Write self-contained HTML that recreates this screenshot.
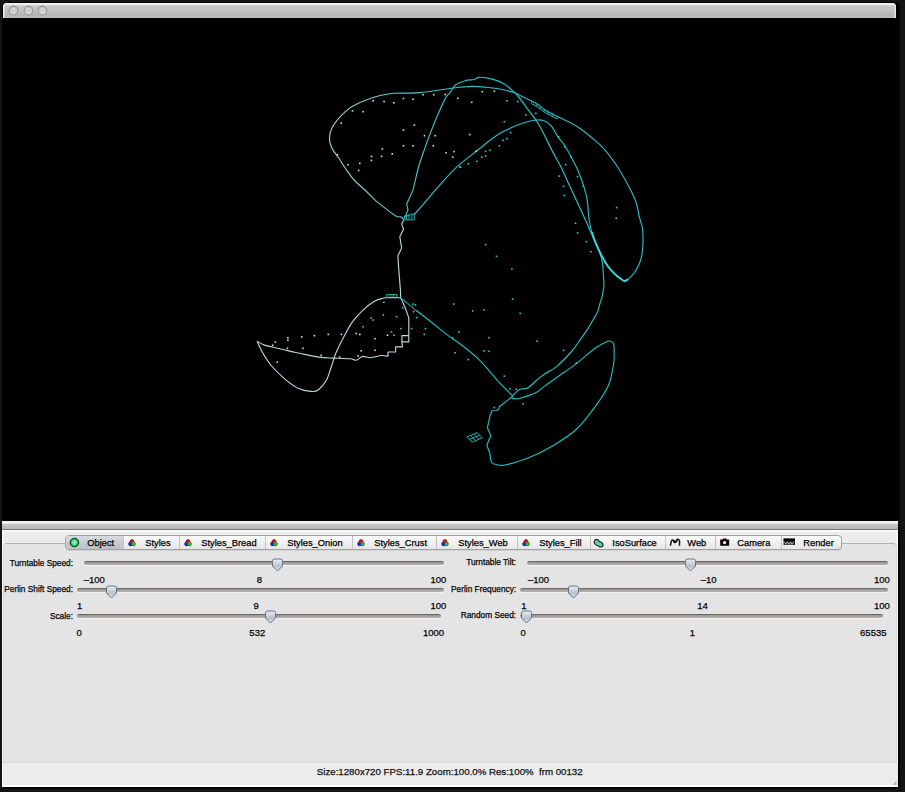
<!DOCTYPE html>
<html><head><meta charset="utf-8"><style>
html,body{margin:0;padding:0;width:905px;height:792px;overflow:hidden;background:#141414;position:relative;font-family:"Liberation Sans", sans-serif}
.t{position:absolute;white-space:nowrap;line-height:normal;font-family:"Liberation Sans", sans-serif;-webkit-text-stroke:0.25px currentColor}
#shadow{position:absolute;left:1.5px;top:2px;width:898.2px;height:786.5px;background:#030303;border-radius:5px 5px 2px 2px}
#title{position:absolute;left:3px;top:3px;width:893px;height:15px;border-radius:4px 4px 0 0;background:linear-gradient(#e8e8e8 0,#f2f2f2 1px,#eeeeee 1.8px,#c9c9c9 2.6px,#c2c2c2 7px,#b3b3b3 12.8px,#bababa 13.6px,#bebebe 15px);box-shadow:inset 1.5px 0 0 #ececec, inset -1.5px 0 0 #e6e6e6}
.btn{position:absolute;top:4.9px}
#canvas{position:absolute;left:3px;top:18px;width:893px;height:504px;background:#000}
#panel{position:absolute;left:2px;top:521px;width:896px;height:266px;background:#ececec;box-shadow:inset 1.5px 0 0 #fbfbfb, inset -1.5px 0 0 #fbfbfb}
#split{position:absolute;left:2px;top:522.4px;width:896px;height:10px;background:linear-gradient(#f6f6f6 0,#f2f2f2 1.2px,#c6c6c6 2px,#b8b8b8 6.5px,#7c7c7c 6.9px,#7c7c7c 7.7px,#f8f8f8 8.2px,#f8f8f8 9.5px,#ececec 10px)}
#content{position:absolute;left:3px;top:542.8px;width:892px;height:218.5px;background:#e4e4e4;border-top:1.8px solid #b2b2b2;border-left:1px solid #d6d6d6;border-right:1px solid #d6d6d6;border-bottom:1px solid #d8d8d8;border-radius:4px 4px 0 0}
#status{position:absolute;left:3px;top:763px;width:895px;height:22px;background:#ececec}
#bottomline{position:absolute;left:2px;top:785px;width:896px;height:1.7px;background:#fff}
#tabbar{position:absolute;left:65px;top:535.4px;width:776.5px;height:14.8px;box-sizing:border-box;border:1px solid #a2a2a2;border-radius:4px;background:linear-gradient(#fbfbfb,#f0f0f0 50%,#e6e6e6);box-shadow:0 0.5px 0.5px rgba(0,0,0,0.15);overflow:hidden}
.tab{position:absolute;top:0;height:14px}
.tab.sel{background:linear-gradient(#d8dde2,#c4cad0 50%,#b9c0c8)}
.sep{position:absolute;top:0;width:1px;height:14px;background:#c4c4c4}
.trk{position:absolute;height:4px;border-radius:2px;background:linear-gradient(#6c6866 0,#6c6866 0.9px,#9c9896 1.4px,#aaa6a4 3px,#bcb8b6 4px);box-shadow:0 1px 0 rgba(255,255,255,0.55)}
.thumb{position:absolute}
.ic{position:absolute}
</style></head><body>
<div id="shadow"></div>
<div id="title"></div>
<svg class="btn" style="left:8.1px" width="11" height="11" viewBox="0 0 11 11"><defs><linearGradient id="bg0" x1="0" y1="0" x2="0" y2="1"><stop offset="0" stop-color="#a8a8a8"/><stop offset="0.35" stop-color="#c4c4c4"/><stop offset="1" stop-color="#dcdcdc"/></linearGradient></defs><circle cx="5.5" cy="5.5" r="4.4" fill="url(#bg0)" stroke="#8e8e8e" stroke-width="0.9"/><ellipse cx="5.5" cy="3.4" rx="2" ry="1" fill="#e8e8e8" opacity="0.7"/></svg><svg class="btn" style="left:22.5px" width="11" height="11" viewBox="0 0 11 11"><defs><linearGradient id="bg1" x1="0" y1="0" x2="0" y2="1"><stop offset="0" stop-color="#a8a8a8"/><stop offset="0.35" stop-color="#c4c4c4"/><stop offset="1" stop-color="#dcdcdc"/></linearGradient></defs><circle cx="5.5" cy="5.5" r="4.4" fill="url(#bg1)" stroke="#8e8e8e" stroke-width="0.9"/><ellipse cx="5.5" cy="3.4" rx="2" ry="1" fill="#e8e8e8" opacity="0.7"/></svg><svg class="btn" style="left:37.4px" width="11" height="11" viewBox="0 0 11 11"><defs><linearGradient id="bg2" x1="0" y1="0" x2="0" y2="1"><stop offset="0" stop-color="#a8a8a8"/><stop offset="0.35" stop-color="#c4c4c4"/><stop offset="1" stop-color="#dcdcdc"/></linearGradient></defs><circle cx="5.5" cy="5.5" r="4.4" fill="url(#bg2)" stroke="#8e8e8e" stroke-width="0.9"/><ellipse cx="5.5" cy="3.4" rx="2" ry="1" fill="#e8e8e8" opacity="0.7"/></svg>
<div id="canvas"><svg width="893" height="504" viewBox="3 18 893 504" style="position:absolute;left:0;top:0"><defs><linearGradient id="lg" gradientUnits="userSpaceOnUse" x1="330" y1="0" x2="450" y2="0"><stop offset="0" stop-color="#a0d0d0"/><stop offset="1" stop-color="#2cbcc4"/></linearGradient></defs>
<path d="M403.6 219.7 L401.7 217.1 L396.6 216.5 L390.3 212.1 L376.4 201.4 L365.0 190.0" fill="none" stroke="url(#lg)" stroke-width="1.15" stroke-opacity="1" stroke-linejoin="round"/>
<path d="M365.0 190.0 C363.2 188.3 357.4 183.6 354.1 180.0 C350.9 176.4 348.0 172.1 345.5 168.5 C343.0 164.9 341.0 161.5 338.9 158.3 C336.8 155.1 334.2 152.6 332.6 149.4 C331.0 146.2 329.5 143.1 329.5 139.3 C329.5 135.5 330.0 131.3 332.6 126.7 C335.2 122.1 341.1 115.5 345.3 111.6 C349.5 107.7 352.2 106.0 357.9 103.4 C363.6 100.8 373.4 97.5 379.3 95.8 C385.2 94.1 386.5 93.8 393.2 93.3 C399.9 92.8 410.0 93.4 419.7 92.6 C429.4 91.8 442.9 89.2 451.5 88.2 C460.1 87.2 465.1 86.5 471.6 86.4 C478.1 86.3 484.8 87.1 490.5 87.7 C496.2 88.3 501.5 89.2 505.7 90.2 C509.9 91.2 513.1 92.4 515.8 93.4 C518.5 94.5 518.8 94.8 522.1 96.5 C525.5 98.2 531.9 101.0 535.9 103.3 C539.9 105.6 542.2 108.3 546.0 110.6 C549.8 112.9 554.6 115.0 558.6 117.0 C562.6 119.0 566.4 120.6 570.0 122.5 C573.6 124.4 576.4 126.0 580.0 128.5 C583.6 131.0 587.9 134.5 591.8 137.7 C595.6 140.9 599.1 143.4 603.1 147.8 C607.1 152.2 611.6 157.9 615.8 164.2 C620.0 170.5 625.0 179.4 628.4 185.7 C631.8 192.0 634.2 196.9 636.0 202.0 C637.8 207.1 638.0 211.5 639.1 216.0 C640.2 220.5 641.9 224.5 642.5 228.8 C643.1 233.2 643.1 238.0 643.0 242.1 C642.9 246.2 642.7 250.1 642.1 253.6 C641.5 257.1 640.8 260.1 639.5 263.3 C638.2 266.5 636.1 270.4 634.2 273.0 C632.3 275.6 629.6 277.9 628.0 279.2 C626.4 280.5 625.1 280.7 624.5 281.0" fill="none" stroke="url(#lg)" stroke-width="1.15" stroke-opacity="1" stroke-linejoin="round"/>
<path d="M624.5 281.0 C623.8 280.6 621.6 279.5 620.0 278.3 C618.4 277.1 616.8 276.0 614.7 273.9 C612.7 271.8 609.9 269.0 607.7 265.9 C605.5 262.8 603.6 259.3 601.5 255.3 C599.4 251.3 597.6 247.1 595.3 242.1 C593.0 237.1 589.4 229.0 587.8 225.3 C586.2 221.6 587.4 224.1 585.5 220.0 C583.6 215.9 579.4 206.7 576.6 200.8 C573.9 194.9 571.5 189.9 569.0 184.4 C566.5 178.9 564.2 173.5 561.5 168.0 C558.8 162.5 556.2 158.5 552.6 151.6 C549.0 144.7 543.2 132.3 540.0 126.5 C536.8 120.7 535.8 120.0 533.4 116.7 C531.0 113.4 528.4 110.0 525.9 106.6 C523.4 103.2 520.6 99.2 518.3 96.5 C516.0 93.8 514.3 92.3 512.0 90.2 C509.7 88.1 507.1 85.6 504.4 83.9 C501.7 82.2 498.3 81.0 495.6 80.1 C492.9 79.1 490.8 78.7 488.0 78.2 C485.2 77.7 481.4 77.1 479.1 77.3 C476.8 77.5 476.4 78.9 474.1 79.5 C471.8 80.1 468.5 79.8 465.3 80.7 C462.1 81.7 457.7 83.2 455.2 85.2 C452.7 87.2 451.8 90.4 450.1 92.7 C448.4 95.0 448.1 92.7 445.0 99.0 C441.9 105.3 435.7 119.4 431.3 130.6 C426.9 141.8 420.8 160.1 418.7 166.0" fill="none" stroke="url(#lg)" stroke-width="1.2" stroke-opacity="1" stroke-linejoin="round"/>
<path d="M418.7 166.0 L413.0 190.0 L406.7 203.9 L408.0 210.2 L403.6 219.7" fill="none" stroke="url(#lg)" stroke-width="1.1" stroke-opacity="1" stroke-linejoin="round"/>
<path d="M413.6 215.2 C415.3 213.3 419.5 208.6 423.7 203.8 C427.9 199.0 433.4 192.3 438.9 186.2 C444.4 180.1 450.3 173.1 456.6 167.2 C462.9 161.3 469.5 156.5 476.8 150.8 C484.1 145.1 492.8 137.7 500.5 133.1 C508.2 128.5 517.3 125.2 523.2 123.0 C529.1 120.8 532.5 120.4 535.9 120.0 C539.3 119.6 540.9 119.6 543.4 120.5 C545.9 121.4 548.6 122.9 551.0 125.6 C553.4 128.2 555.3 132.9 557.7 136.4 C560.1 139.9 563.0 142.9 565.3 146.5 C567.6 150.1 569.5 153.9 571.6 157.9 C573.7 161.9 575.9 165.9 577.9 170.5 C579.9 175.1 582.0 180.6 583.6 185.7 C585.2 190.8 586.4 195.1 587.3 200.8 C588.2 206.5 588.3 214.2 589.2 220.0 C590.1 225.8 591.0 230.5 592.7 235.9 C594.5 241.3 598.1 248.3 599.7 252.7 C601.3 257.1 601.8 259.0 602.4 262.4 C603.0 265.8 603.0 269.2 603.3 273.0 C603.5 276.8 604.0 281.5 603.9 285.2 C603.8 288.9 603.1 291.9 602.4 295.3 C601.6 298.7 600.2 302.5 599.4 305.4 C598.6 308.2 598.4 310.0 597.4 312.4 C596.4 314.8 595.0 316.6 593.3 319.5 C591.6 322.4 589.5 326.2 587.3 329.6 C585.1 333.0 582.8 336.1 580.2 339.7 C577.7 343.3 575.9 346.5 572.0 351.0 C568.1 355.5 561.1 362.8 556.6 366.6 C552.1 370.4 548.7 371.3 545.3 373.6 C541.9 375.9 539.3 378.1 536.4 380.5 C533.5 382.9 530.3 386.6 527.6 388.1 C524.9 389.6 522.2 388.3 520.0 389.3 C517.8 390.3 515.5 392.9 514.1 394.2 C512.7 395.5 512.2 396.5 511.8 397.0" fill="none" stroke="url(#lg)" stroke-width="1.15" stroke-opacity="1" stroke-linejoin="round"/>
<path d="M511.8 397.0 L499.3 406.7 L498.8 409.0 L497.0 410.5 L492.0 410.7 L490.2 415.2 L487.4 427.7 L490.8 435.7 L486.8 445.3 L489.7 452.7 L490.8 460.7 L492.5 463.5" fill="none" stroke="#22bcc0" stroke-width="1.15" stroke-opacity="1" stroke-linejoin="round"/>
<path d="M492.5 463.5 C494.4 463.8 497.6 466.2 503.9 465.2 C510.1 464.2 522.1 460.4 530.0 457.3 C537.9 454.2 543.4 451.4 551.0 446.8 C558.6 442.2 568.1 436.8 575.6 430.0 C583.1 423.2 590.3 413.2 595.8 405.8 C601.3 398.4 605.5 392.3 608.4 385.6 C611.3 378.9 612.4 370.4 613.4 365.4 C614.4 360.3 614.1 359.0 614.1 355.3 C614.1 351.6 614.4 345.7 613.4 343.3 C612.4 340.9 609.2 341.1 608.4 340.7" fill="none" stroke="#22bcc0" stroke-width="1.15" stroke-opacity="1" stroke-linejoin="round"/>
<path d="M608.4 340.7 C606.3 341.9 601.3 343.8 595.8 347.7 C590.3 351.6 581.9 359.3 575.6 364.1 C569.3 368.9 563.0 373.1 557.9 376.7 C552.8 380.3 549.1 382.9 545.3 385.6 C541.5 388.3 539.4 391.0 535.2 393.1 C531.0 395.2 523.7 397.3 520.0 398.2 C516.3 399.1 514.4 398.9 513.0 398.8 C511.6 398.6 512.0 397.3 511.8 397.0" fill="none" stroke="#22bcc0" stroke-width="1.15" stroke-opacity="1" stroke-linejoin="round"/>
<path d="M415.8 310.3 C417.6 311.7 422.5 315.1 426.8 318.5 C431.1 321.9 438.0 327.5 441.9 330.6 C445.8 333.7 446.6 334.4 450.0 336.9 C453.4 339.4 457.6 341.8 462.6 345.8 C467.7 349.8 474.4 355.0 480.3 360.9 C486.2 366.8 492.5 375.2 498.0 381.1 C503.5 387.0 510.6 393.8 513.1 396.3" fill="none" stroke="#22bcc0" stroke-width="1.15" stroke-opacity="1" stroke-linejoin="round"/>
<path d="M403.6 220.3 L401.7 224.1 L403.6 229.1 L399.8 236.7 L401.7 248.1 L397.9 255.7 L398.5 265.8 L400.4 290.0 L400.7 297.7" fill="none" stroke="#b8d8d8" stroke-width="1.15" stroke-opacity="1" stroke-linejoin="round"/>
<path d="M400.6 298.3 C400.4 298.2 401.6 297.8 399.3 297.7 C397.0 297.6 389.4 297.6 386.7 297.7 C384.0 297.8 385.0 297.7 382.9 298.3 C380.8 298.9 377.5 299.5 374.1 301.5 C370.7 303.5 366.3 306.9 362.7 310.3 C359.1 313.7 355.7 317.4 352.6 321.7 C349.6 325.9 347.1 330.7 344.4 335.8 C341.6 340.9 338.2 347.6 336.1 352.5 C334.0 357.4 333.5 360.4 331.9 365.0 C330.3 369.6 328.7 376.1 326.4 380.3 C324.1 384.5 320.7 388.1 318.1 390.0 C315.6 391.9 314.4 391.6 311.1 391.4 C307.9 391.2 303.0 390.7 298.6 388.6 C294.2 386.5 289.3 382.8 284.7 378.9 C280.1 375.0 274.5 369.4 270.8 365.0 C267.1 360.6 264.8 356.5 262.5 352.5 C260.2 348.5 258.0 343.1 257.1 341.2" fill="none" stroke="#b8d8d8" stroke-width="1.15" stroke-opacity="1" stroke-linejoin="round"/>
<path d="M257.1 341.2 C258.2 341.8 260.4 343.7 263.9 344.9 C267.3 346.1 272.5 347.0 277.8 348.3 C283.1 349.6 291.2 351.4 295.8 352.5 C300.4 353.6 301.4 353.8 305.6 354.6 C309.8 355.4 316.2 356.8 320.8 357.4 C325.4 358.0 328.4 357.9 333.3 358.1 C338.2 358.3 346.1 358.5 350.0 358.8 C353.9 359.1 354.3 360.6 356.4 360.2 C358.5 359.8 360.4 356.8 362.7 356.4 C365.0 356.0 367.1 357.8 370.3 357.7 C373.5 357.6 378.8 355.7 381.7 355.5 C384.6 355.3 386.9 356.2 388.0 356.4" fill="none" stroke="#b8d8d8" stroke-width="1.15" stroke-opacity="1" stroke-linejoin="round"/>
<path d="M388.0 356.4 L388.0 352.0 L395.6 352.0 L395.6 346.9 L402.5 346.9 L401.9 341.9 L408.8 341.9 L408.8 317.9 L405.7 309.0 L401.9 300.2 L400.6 298.3" fill="none" stroke="#b8d8d8" stroke-width="1.15" stroke-opacity="1" stroke-linejoin="round"/>
<path d="M401.9 341.9 L401.9 335.6 L408.8 335.6" fill="none" stroke="#b8d8d8" stroke-width="1.15" stroke-opacity="1" stroke-linejoin="round"/>
<path d="M403.8 216.6 L414.3 213.8 L414.3 219.9 L403.8 219.9" fill="none" stroke="#22bcc0" stroke-width="0.9" stroke-opacity="1" stroke-linejoin="round"/>
<path d="M406.5 214.8 L406.5 219.9" fill="none" stroke="#22bcc0" stroke-width="0.9" stroke-opacity="1" stroke-linejoin="round"/>
<path d="M409.0 214.2 L409.0 219.9" fill="none" stroke="#22bcc0" stroke-width="0.9" stroke-opacity="1" stroke-linejoin="round"/>
<path d="M411.8 213.5 L411.8 219.9" fill="none" stroke="#22bcc0" stroke-width="0.9" stroke-opacity="1" stroke-linejoin="round"/>
<path d="M386.7 297.7 L386.7 294.5 L396.8 294.5 L396.8 297.7" fill="none" stroke="#22bcc0" stroke-width="0.9" stroke-opacity="1" stroke-linejoin="round"/>
<path d="M390.0 294.5 L390.0 297.7" fill="none" stroke="#22bcc0" stroke-width="0.9" stroke-opacity="1" stroke-linejoin="round"/>
<path d="M393.4 294.5 L393.4 297.7" fill="none" stroke="#22bcc0" stroke-width="0.9" stroke-opacity="1" stroke-linejoin="round"/>
<path d="M400.6 298.3 L404.4 300.2 L405.0 301.8 L408.2 303.4 L409.0 305.0 L412.0 306.5 L413.0 308.5 L415.8 310.3 L422.0 314.5" fill="none" stroke="#22bcc0" stroke-width="1.0" stroke-opacity="1" stroke-linejoin="round"/>
<path d="M531.5 103.7 L536.0 106.0 L540.0 108.9 L544.0 111.8 L548.0 114.2 L552.0 116.2 L557.0 118.8" fill="none" stroke="#22bcc0" stroke-width="1.0" stroke-opacity="1" stroke-linejoin="round"/>
<path d="M531.5 103.7 L531.8 101.1" fill="none" stroke="#22bcc0" stroke-width="0.9" stroke-opacity="1" stroke-linejoin="round"/>
<path d="M536.0 106.0 L536.3 103.4" fill="none" stroke="#22bcc0" stroke-width="0.9" stroke-opacity="1" stroke-linejoin="round"/>
<path d="M540.0 108.9 L540.3 106.3" fill="none" stroke="#22bcc0" stroke-width="0.9" stroke-opacity="1" stroke-linejoin="round"/>
<path d="M544.0 111.8 L544.3 109.2" fill="none" stroke="#22bcc0" stroke-width="0.9" stroke-opacity="1" stroke-linejoin="round"/>
<path d="M548.0 114.2 L548.3 111.6" fill="none" stroke="#22bcc0" stroke-width="0.9" stroke-opacity="1" stroke-linejoin="round"/>
<path d="M552.0 116.2 L552.3 113.6" fill="none" stroke="#22bcc0" stroke-width="0.9" stroke-opacity="1" stroke-linejoin="round"/>
<path d="M557.0 118.8 L557.3 116.2" fill="none" stroke="#22bcc0" stroke-width="0.9" stroke-opacity="1" stroke-linejoin="round"/>
<path d="M466.9 436.8 L472.2 442.1" fill="none" stroke="#22bcc0" stroke-width="0.9" stroke-opacity="1" stroke-linejoin="round"/>
<path d="M470.3 435.4 L475.6 440.7" fill="none" stroke="#22bcc0" stroke-width="0.9" stroke-opacity="1" stroke-linejoin="round"/>
<path d="M473.7 434.0 L479.0 439.3" fill="none" stroke="#22bcc0" stroke-width="0.9" stroke-opacity="1" stroke-linejoin="round"/>
<path d="M477.1 432.6 L482.4 437.9" fill="none" stroke="#22bcc0" stroke-width="0.9" stroke-opacity="1" stroke-linejoin="round"/>
<path d="M466.9 436.8 L477.1 432.6" fill="none" stroke="#22bcc0" stroke-width="0.9" stroke-opacity="1" stroke-linejoin="round"/>
<path d="M469.5 439.4 L479.8 435.2" fill="none" stroke="#22bcc0" stroke-width="0.9" stroke-opacity="1" stroke-linejoin="round"/>
<path d="M472.2 442.1 L482.4 437.9" fill="none" stroke="#22bcc0" stroke-width="0.9" stroke-opacity="1" stroke-linejoin="round"/>
<rect x="372.4" y="100.0" width="1.6" height="1.6" fill="#dadada"/>
<rect x="383.3" y="100.8" width="1.6" height="1.6" fill="#dadada"/>
<rect x="393.1" y="102.0" width="1.6" height="1.6" fill="#dadada"/>
<rect x="402.7" y="97.7" width="1.6" height="1.6" fill="#dadada"/>
<rect x="412.3" y="98.5" width="1.6" height="1.6" fill="#dadada"/>
<rect x="422.2" y="93.9" width="1.6" height="1.6" fill="#dadada"/>
<rect x="433.0" y="93.9" width="1.6" height="1.6" fill="#dadada"/>
<rect x="444.4" y="93.7" width="1.6" height="1.6" fill="#dadada"/>
<rect x="457.0" y="97.5" width="1.6" height="1.6" fill="#dadada"/>
<rect x="470.9" y="101.5" width="1.6" height="1.6" fill="#dadada"/>
<rect x="481.5" y="90.9" width="1.6" height="1.6" fill="#dadada"/>
<rect x="493.6" y="90.4" width="1.6" height="1.6" fill="#dadada"/>
<rect x="351.7" y="110.1" width="1.6" height="1.6" fill="#dadada"/>
<rect x="362.3" y="110.9" width="1.6" height="1.6" fill="#dadada"/>
<rect x="340.4" y="122.2" width="1.6" height="1.6" fill="#dadada"/>
<rect x="402.7" y="129.3" width="1.6" height="1.6" fill="#dadada"/>
<rect x="413.6" y="124.3" width="1.6" height="1.6" fill="#dadada"/>
<rect x="423.7" y="134.9" width="1.6" height="1.6" fill="#dadada"/>
<rect x="434.3" y="134.9" width="1.6" height="1.6" fill="#dadada"/>
<rect x="468.9" y="133.8" width="1.6" height="1.6" fill="#dadada"/>
<rect x="336.6" y="153.8" width="1.6" height="1.6" fill="#dadada"/>
<rect x="347.2" y="163.9" width="1.6" height="1.6" fill="#dadada"/>
<rect x="359.0" y="162.6" width="1.6" height="1.6" fill="#dadada"/>
<rect x="357.8" y="169.7" width="1.6" height="1.6" fill="#dadada"/>
<rect x="370.7" y="155.6" width="1.6" height="1.6" fill="#dadada"/>
<rect x="370.7" y="159.6" width="1.6" height="1.6" fill="#dadada"/>
<rect x="381.5" y="148.2" width="1.6" height="1.6" fill="#dadada"/>
<rect x="380.8" y="155.6" width="1.6" height="1.6" fill="#dadada"/>
<rect x="391.4" y="153.0" width="1.6" height="1.6" fill="#dadada"/>
<rect x="402.7" y="145.0" width="1.6" height="1.6" fill="#dadada"/>
<rect x="412.3" y="145.0" width="1.6" height="1.6" fill="#dadada"/>
<rect x="432.5" y="145.0" width="1.6" height="1.6" fill="#dadada"/>
<rect x="445.2" y="152.0" width="1.6" height="1.6" fill="#dadada"/>
<rect x="453.2" y="150.8" width="1.6" height="1.6" fill="#dadada"/>
<rect x="452.0" y="156.3" width="1.6" height="1.6" fill="#dadada"/>
<rect x="475.5" y="150.5" width="1.6" height="1.6" fill="#dadada"/>
<rect x="467.6" y="163.1" width="1.6" height="1.6" fill="#2ccccc"/>
<rect x="476.0" y="160.6" width="1.6" height="1.6" fill="#2ccccc"/>
<rect x="481.0" y="156.3" width="1.6" height="1.6" fill="#2ccccc"/>
<rect x="484.8" y="155.1" width="1.6" height="1.6" fill="#2ccccc"/>
<rect x="484.8" y="150.5" width="1.6" height="1.6" fill="#2ccccc"/>
<rect x="489.1" y="149.5" width="1.6" height="1.6" fill="#2ccccc"/>
<rect x="498.7" y="145.0" width="1.6" height="1.6" fill="#2ccccc"/>
<rect x="484.8" y="243.9" width="1.6" height="1.6" fill="#2ccccc"/>
<rect x="495.7" y="255.6" width="1.6" height="1.6" fill="#2ccccc"/>
<rect x="459.6" y="166.4" width="1.6" height="1.6" fill="#2ccccc"/>
<rect x="503.5" y="121.0" width="1.6" height="1.6" fill="#2ccccc"/>
<rect x="506.0" y="100.0" width="1.6" height="1.6" fill="#2ccccc"/>
<rect x="516.9" y="100.8" width="1.6" height="1.6" fill="#2ccccc"/>
<rect x="525.0" y="114.1" width="1.6" height="1.6" fill="#2ccccc"/>
<rect x="458.8" y="165.9" width="1.6" height="1.6" fill="#2ccccc"/>
<rect x="502.2" y="139.4" width="1.6" height="1.6" fill="#2ccccc"/>
<rect x="506.0" y="137.9" width="1.6" height="1.6" fill="#2ccccc"/>
<rect x="509.8" y="131.8" width="1.6" height="1.6" fill="#2ccccc"/>
<rect x="535.1" y="112.6" width="1.6" height="1.6" fill="#2ccccc"/>
<rect x="557.8" y="136.1" width="1.6" height="1.6" fill="#2ccccc"/>
<rect x="564.1" y="146.2" width="1.6" height="1.6" fill="#2ccccc"/>
<rect x="570.4" y="156.3" width="1.6" height="1.6" fill="#2ccccc"/>
<rect x="564.9" y="163.9" width="1.6" height="1.6" fill="#2ccccc"/>
<rect x="558.3" y="175.3" width="1.6" height="1.6" fill="#2ccccc"/>
<rect x="576.7" y="175.8" width="1.6" height="1.6" fill="#2ccccc"/>
<rect x="562.8" y="185.4" width="1.6" height="1.6" fill="#2ccccc"/>
<rect x="582.5" y="185.4" width="1.6" height="1.6" fill="#2ccccc"/>
<rect x="563.6" y="194.7" width="1.6" height="1.6" fill="#2ccccc"/>
<rect x="615.9" y="206.8" width="1.6" height="1.6" fill="#2ccccc"/>
<rect x="615.4" y="217.4" width="1.6" height="1.6" fill="#2ccccc"/>
<rect x="574.7" y="222.5" width="1.6" height="1.6" fill="#2ccccc"/>
<rect x="576.7" y="232.1" width="1.6" height="1.6" fill="#2ccccc"/>
<rect x="585.6" y="240.9" width="1.6" height="1.6" fill="#2ccccc"/>
<rect x="590.1" y="251.0" width="1.6" height="1.6" fill="#2ccccc"/>
<rect x="511.1" y="268.2" width="1.6" height="1.6" fill="#2ccccc"/>
<rect x="274.5" y="341.2" width="1.6" height="1.6" fill="#dadada"/>
<rect x="287.1" y="336.9" width="1.6" height="1.6" fill="#dadada"/>
<rect x="287.1" y="339.4" width="1.6" height="1.6" fill="#dadada"/>
<rect x="301.0" y="336.1" width="1.6" height="1.6" fill="#dadada"/>
<rect x="313.6" y="334.9" width="1.6" height="1.6" fill="#dadada"/>
<rect x="327.5" y="333.6" width="1.6" height="1.6" fill="#dadada"/>
<rect x="340.6" y="333.6" width="1.6" height="1.6" fill="#dadada"/>
<rect x="355.3" y="332.8" width="1.6" height="1.6" fill="#dadada"/>
<rect x="359.0" y="333.6" width="1.6" height="1.6" fill="#dadada"/>
<rect x="374.2" y="337.9" width="1.6" height="1.6" fill="#dadada"/>
<rect x="386.8" y="334.4" width="1.6" height="1.6" fill="#dadada"/>
<rect x="302.2" y="347.5" width="1.6" height="1.6" fill="#dadada"/>
<rect x="286.6" y="347.5" width="1.6" height="1.6" fill="#dadada"/>
<rect x="271.9" y="344.5" width="1.6" height="1.6" fill="#dadada"/>
<rect x="276.5" y="361.4" width="1.6" height="1.6" fill="#dadada"/>
<rect x="320.4" y="354.6" width="1.6" height="1.6" fill="#dadada"/>
<rect x="338.8" y="356.3" width="1.6" height="1.6" fill="#dadada"/>
<rect x="357.3" y="355.1" width="1.6" height="1.6" fill="#dadada"/>
<rect x="360.3" y="350.0" width="1.6" height="1.6" fill="#dadada"/>
<rect x="374.2" y="349.5" width="1.6" height="1.6" fill="#dadada"/>
<rect x="383.0" y="301.5" width="1.6" height="1.6" fill="#2ccccc"/>
<rect x="402.0" y="307.1" width="1.6" height="1.6" fill="#2ccccc"/>
<rect x="412.8" y="310.9" width="1.6" height="1.6" fill="#2ccccc"/>
<rect x="412.1" y="303.3" width="1.6" height="1.6" fill="#2ccccc"/>
<rect x="414.6" y="304.0" width="1.6" height="1.6" fill="#2ccccc"/>
<rect x="370.4" y="317.2" width="1.6" height="1.6" fill="#2ccccc"/>
<rect x="372.4" y="319.2" width="1.6" height="1.6" fill="#2ccccc"/>
<rect x="382.5" y="314.1" width="1.6" height="1.6" fill="#2ccccc"/>
<rect x="395.7" y="315.9" width="1.6" height="1.6" fill="#2ccccc"/>
<rect x="362.3" y="326.0" width="1.6" height="1.6" fill="#2ccccc"/>
<rect x="390.6" y="331.1" width="1.6" height="1.6" fill="#2ccccc"/>
<rect x="393.1" y="334.4" width="1.6" height="1.6" fill="#2ccccc"/>
<rect x="400.2" y="327.8" width="1.6" height="1.6" fill="#2ccccc"/>
<rect x="410.8" y="327.8" width="1.6" height="1.6" fill="#2ccccc"/>
<rect x="424.7" y="327.8" width="1.6" height="1.6" fill="#2ccccc"/>
<rect x="423.4" y="333.6" width="1.6" height="1.6" fill="#2ccccc"/>
<rect x="415.9" y="316.7" width="1.6" height="1.6" fill="#2ccccc"/>
<rect x="453.0" y="303.3" width="1.6" height="1.6" fill="#2ccccc"/>
<rect x="471.9" y="310.1" width="1.6" height="1.6" fill="#2ccccc"/>
<rect x="483.3" y="309.1" width="1.6" height="1.6" fill="#2ccccc"/>
<rect x="511.8" y="298.2" width="1.6" height="1.6" fill="#2ccccc"/>
<rect x="519.4" y="312.6" width="1.6" height="1.6" fill="#2ccccc"/>
<rect x="458.0" y="331.1" width="1.6" height="1.6" fill="#2ccccc"/>
<rect x="451.7" y="336.9" width="1.6" height="1.6" fill="#2ccccc"/>
<rect x="488.3" y="336.9" width="1.6" height="1.6" fill="#2ccccc"/>
<rect x="536.3" y="340.4" width="1.6" height="1.6" fill="#2ccccc"/>
<rect x="454.3" y="352.0" width="1.6" height="1.6" fill="#2ccccc"/>
<rect x="483.3" y="350.0" width="1.6" height="1.6" fill="#2ccccc"/>
<rect x="488.3" y="350.5" width="1.6" height="1.6" fill="#2ccccc"/>
<rect x="467.4" y="358.8" width="1.6" height="1.6" fill="#2ccccc"/>
<rect x="562.8" y="349.5" width="1.6" height="1.6" fill="#2ccccc"/>
<rect x="575.5" y="362.1" width="1.6" height="1.6" fill="#2ccccc"/>
<rect x="503.5" y="375.3" width="1.6" height="1.6" fill="#2ccccc"/>
<rect x="509.3" y="387.9" width="1.6" height="1.6" fill="#2ccccc"/>
<rect x="515.4" y="388.4" width="1.6" height="1.6" fill="#2ccccc"/>
<rect x="522.4" y="403.0" width="1.6" height="1.6" fill="#2ccccc"/>
<rect x="493.4" y="406.8" width="1.6" height="1.6" fill="#2ccccc"/>
<path d="M592.0 232.0 C592.5 233.7 593.7 238.2 595.3 242.1 C596.9 246.0 599.4 251.3 601.5 255.3 C603.6 259.3 605.5 262.8 607.7 265.9 C609.9 269.0 612.7 271.8 614.7 273.9 C616.8 276.0 618.4 277.1 620.0 278.3 C621.6 279.5 623.2 280.9 624.5 281.0 C625.8 281.1 627.4 279.5 628.0 279.2" fill="none" stroke="#38d8dc" stroke-width="1.8" stroke-opacity="1" stroke-linejoin="round"/></svg></div>
<div id="panel"></div>
<div id="split"></div>
<div id="content"></div>
<div id="status"></div>
<div id="bottomline"></div><svg style="position:absolute;left:891px;top:780px" width="7" height="6" viewBox="0 0 7 6"><path d="M5.5 0.8 L1.5 5 L5.5 5 Z" fill="#b4b4b4"/></svg>
<div id="tabbar"><div class="tab sel" style="left:-1px;width:58px"></div><div class="tab" style="left:57px;width:56px"></div><div class="sep" style="left:57px"></div><div class="tab" style="left:113px;width:86px"></div><div class="sep" style="left:113px"></div><div class="tab" style="left:199px;width:87px"></div><div class="sep" style="left:199px"></div><div class="tab" style="left:286px;width:84px"></div><div class="sep" style="left:286px"></div><div class="tab" style="left:370px;width:81px"></div><div class="sep" style="left:370px"></div><div class="tab" style="left:451px;width:73px"></div><div class="sep" style="left:451px"></div><div class="tab" style="left:524px;width:75px"></div><div class="sep" style="left:524px"></div><div class="tab" style="left:599px;width:50px"></div><div class="sep" style="left:599px"></div><div class="tab" style="left:649px;width:66px"></div><div class="sep" style="left:649px"></div><div class="tab" style="left:715px;width:60px"></div><div class="sep" style="left:715px"></div></div>
<div class="t" style="right:832.00px;top:557.79px;font-size:8.3px;color:#050505;font-weight:normal;">Turntable Speed:</div><div class="trk" style="left:83.7px;top:561.2px;width:360.4px"></div><div class="t" style="left:83.70px;top:574.10px;font-size:9.5px;color:#050505;font-weight:normal;">&#8211;100</div><div class="t" style="left:59.40px;width:400px;text-align:center;top:574.10px;font-size:9.5px;color:#050505;font-weight:normal;">8</div><div class="t" style="right:458.70px;top:574.10px;font-size:9.5px;color:#050505;font-weight:normal;">100</div><div class="t" style="right:832.00px;top:584.29px;font-size:8.3px;color:#050505;font-weight:normal;">Perlin Shift Speed:</div><div class="trk" style="left:76.8px;top:587.9px;width:367.3px"></div><div class="t" style="left:77.00px;top:600.30px;font-size:9.5px;color:#050505;font-weight:normal;">1</div><div class="t" style="left:56.20px;width:400px;text-align:center;top:600.30px;font-size:9.5px;color:#050505;font-weight:normal;">9</div><div class="t" style="right:458.70px;top:600.30px;font-size:9.5px;color:#050505;font-weight:normal;">100</div><div class="t" style="right:832.00px;top:610.79px;font-size:8.3px;color:#050505;font-weight:normal;">Scale:</div><div class="trk" style="left:76.8px;top:614.4px;width:364.7px"></div><div class="t" style="left:76.60px;top:626.70px;font-size:9.5px;color:#050505;font-weight:normal;">0</div><div class="t" style="left:57.30px;width:400px;text-align:center;top:626.70px;font-size:9.5px;color:#050505;font-weight:normal;">532</div><div class="t" style="right:460.90px;top:626.70px;font-size:9.5px;color:#050505;font-weight:normal;">1000</div><svg class="thumb" style="left:271.1px;top:557.8px" width="13" height="14" viewBox="0 0 13 14"><defs><linearGradient id="tg" x1="0" y1="0" x2="0" y2="1"><stop offset="0" stop-color="#eef2f6"/><stop offset="0.25" stop-color="#d4dce4"/><stop offset="0.6" stop-color="#b8c2cc"/><stop offset="1" stop-color="#e2e8ee"/></linearGradient></defs><path d="M1.5 3.2 Q1.5 1 3.7 1 L9.3 1 Q11.5 1 11.5 3.2 L11.5 8 L6.5 13 L1.5 8 Z" fill="url(#tg)" stroke="#68727c" stroke-width="1"/></svg><svg class="thumb" style="left:105.2px;top:584.7px" width="13" height="14" viewBox="0 0 13 14"><defs><linearGradient id="tg" x1="0" y1="0" x2="0" y2="1"><stop offset="0" stop-color="#eef2f6"/><stop offset="0.25" stop-color="#d4dce4"/><stop offset="0.6" stop-color="#b8c2cc"/><stop offset="1" stop-color="#e2e8ee"/></linearGradient></defs><path d="M1.5 3.2 Q1.5 1 3.7 1 L9.3 1 Q11.5 1 11.5 3.2 L11.5 8 L6.5 13 L1.5 8 Z" fill="url(#tg)" stroke="#68727c" stroke-width="1"/></svg><svg class="thumb" style="left:263.5px;top:610.0px" width="13" height="14" viewBox="0 0 13 14"><defs><linearGradient id="tg" x1="0" y1="0" x2="0" y2="1"><stop offset="0" stop-color="#eef2f6"/><stop offset="0.25" stop-color="#d4dce4"/><stop offset="0.6" stop-color="#b8c2cc"/><stop offset="1" stop-color="#e2e8ee"/></linearGradient></defs><path d="M1.5 3.2 Q1.5 1 3.7 1 L9.3 1 Q11.5 1 11.5 3.2 L11.5 8 L6.5 13 L1.5 8 Z" fill="url(#tg)" stroke="#68727c" stroke-width="1"/></svg><div class="t" style="right:388.90px;top:557.29px;font-size:8.3px;color:#050505;font-weight:normal;">Turntable Tilt:</div><div class="trk" style="left:527.2px;top:561.2px;width:360.4px"></div><div class="t" style="left:528.00px;top:574.20px;font-size:9.5px;color:#050505;font-weight:normal;">&#8211;100</div><div class="t" style="left:508.70px;width:400px;text-align:center;top:574.20px;font-size:9.5px;color:#050505;font-weight:normal;">&#8211;10</div><div class="t" style="right:15.10px;top:574.20px;font-size:9.5px;color:#050505;font-weight:normal;">100</div><div class="t" style="right:388.90px;top:584.19px;font-size:8.3px;color:#050505;font-weight:normal;">Perlin Frequency:</div><div class="trk" style="left:520.4px;top:587.9px;width:367.2px"></div><div class="t" style="left:521.20px;top:600.10px;font-size:9.5px;color:#050505;font-weight:normal;">1</div><div class="t" style="left:502.60px;width:400px;text-align:center;top:600.10px;font-size:9.5px;color:#050505;font-weight:normal;">14</div><div class="t" style="right:15.10px;top:600.10px;font-size:9.5px;color:#050505;font-weight:normal;">100</div><div class="t" style="right:388.90px;top:610.39px;font-size:8.3px;color:#050505;font-weight:normal;">Random Seed:</div><div class="trk" style="left:520.4px;top:614.4px;width:362.4px"></div><div class="t" style="left:520.40px;top:626.60px;font-size:9.5px;color:#050505;font-weight:normal;">0</div><div class="t" style="left:492.40px;width:400px;text-align:center;top:626.60px;font-size:9.5px;color:#050505;font-weight:normal;">1</div><div class="t" style="right:18.50px;top:626.60px;font-size:9.5px;color:#050505;font-weight:normal;">65535</div><svg class="thumb" style="left:683.6px;top:557.8px" width="13" height="14" viewBox="0 0 13 14"><defs><linearGradient id="tg" x1="0" y1="0" x2="0" y2="1"><stop offset="0" stop-color="#eef2f6"/><stop offset="0.25" stop-color="#d4dce4"/><stop offset="0.6" stop-color="#b8c2cc"/><stop offset="1" stop-color="#e2e8ee"/></linearGradient></defs><path d="M1.5 3.2 Q1.5 1 3.7 1 L9.3 1 Q11.5 1 11.5 3.2 L11.5 8 L6.5 13 L1.5 8 Z" fill="url(#tg)" stroke="#68727c" stroke-width="1"/></svg><svg class="thumb" style="left:567.1px;top:584.7px" width="13" height="14" viewBox="0 0 13 14"><defs><linearGradient id="tg" x1="0" y1="0" x2="0" y2="1"><stop offset="0" stop-color="#eef2f6"/><stop offset="0.25" stop-color="#d4dce4"/><stop offset="0.6" stop-color="#b8c2cc"/><stop offset="1" stop-color="#e2e8ee"/></linearGradient></defs><path d="M1.5 3.2 Q1.5 1 3.7 1 L9.3 1 Q11.5 1 11.5 3.2 L11.5 8 L6.5 13 L1.5 8 Z" fill="url(#tg)" stroke="#68727c" stroke-width="1"/></svg><svg class="thumb" style="left:520.2px;top:610.0px" width="13" height="14" viewBox="0 0 13 14"><defs><linearGradient id="tg" x1="0" y1="0" x2="0" y2="1"><stop offset="0" stop-color="#eef2f6"/><stop offset="0.25" stop-color="#d4dce4"/><stop offset="0.6" stop-color="#b8c2cc"/><stop offset="1" stop-color="#e2e8ee"/></linearGradient></defs><path d="M1.5 3.2 Q1.5 1 3.7 1 L9.3 1 Q11.5 1 11.5 3.2 L11.5 8 L6.5 13 L1.5 8 Z" fill="url(#tg)" stroke="#68727c" stroke-width="1"/></svg><div class="t" style="left:316.80px;top:765.62px;font-size:9.7px;color:#111;font-weight:normal;">Size:1280x720 FPS:11.9 Zoom:100.0% Res:100%&nbsp; frm 00132</div><div class="t" style="left:87.30px;top:537.78px;font-size:9.3px;color:#000;font-weight:normal;">Object</div><svg class="ic" style="left:69px;top:537px" width="11" height="11" viewBox="0 0 11 11"><defs><radialGradient id="og" cx="0.5" cy="0.5" r="0.5"><stop offset="0" stop-color="#a8d8ff"/><stop offset="0.45" stop-color="#70e0c0"/><stop offset="0.75" stop-color="#10d020"/><stop offset="1" stop-color="#0a6010"/></radialGradient></defs><circle cx="5.4" cy="5.5" r="4.3" fill="url(#og)" stroke="#102818" stroke-width="0.9"/></svg><div class="t" style="left:145.30px;top:537.78px;font-size:9.3px;color:#000;font-weight:normal;">Styles</div><svg class="ic" style="left:126.6px;top:536.5px" width="10" height="10" viewBox="0 0 10 10"><g stroke="#301818" stroke-width="0.7"><circle cx="5" cy="4.5" r="1.9" fill="#f01010"/><circle cx="3.5" cy="6.9" r="1.9" fill="#1030f0"/><circle cx="6.4" cy="6.9" r="1.9" fill="#10d020"/></g><circle cx="5" cy="4.5" r="1.6" fill="#f01010"/><circle cx="3.5" cy="6.9" r="1.6" fill="#1030f0"/><circle cx="6.4" cy="6.9" r="1.6" fill="#10d020"/></svg><div class="t" style="left:201.30px;top:537.78px;font-size:9.3px;color:#000;font-weight:normal;">Styles_Bread</div><svg class="ic" style="left:182.6px;top:536.5px" width="10" height="10" viewBox="0 0 10 10"><g stroke="#301818" stroke-width="0.7"><circle cx="5" cy="4.5" r="1.9" fill="#f01010"/><circle cx="3.5" cy="6.9" r="1.9" fill="#1030f0"/><circle cx="6.4" cy="6.9" r="1.9" fill="#10d020"/></g><circle cx="5" cy="4.5" r="1.6" fill="#f01010"/><circle cx="3.5" cy="6.9" r="1.6" fill="#1030f0"/><circle cx="6.4" cy="6.9" r="1.6" fill="#10d020"/></svg><div class="t" style="left:287.30px;top:537.78px;font-size:9.3px;color:#000;font-weight:normal;">Styles_Onion</div><svg class="ic" style="left:268.6px;top:536.5px" width="10" height="10" viewBox="0 0 10 10"><g stroke="#301818" stroke-width="0.7"><circle cx="5" cy="4.5" r="1.9" fill="#f01010"/><circle cx="3.5" cy="6.9" r="1.9" fill="#1030f0"/><circle cx="6.4" cy="6.9" r="1.9" fill="#10d020"/></g><circle cx="5" cy="4.5" r="1.6" fill="#f01010"/><circle cx="3.5" cy="6.9" r="1.6" fill="#1030f0"/><circle cx="6.4" cy="6.9" r="1.6" fill="#10d020"/></svg><div class="t" style="left:374.30px;top:537.78px;font-size:9.3px;color:#000;font-weight:normal;">Styles_Crust</div><svg class="ic" style="left:355.6px;top:536.5px" width="10" height="10" viewBox="0 0 10 10"><g stroke="#301818" stroke-width="0.7"><circle cx="5" cy="4.5" r="1.9" fill="#f01010"/><circle cx="3.5" cy="6.9" r="1.9" fill="#1030f0"/><circle cx="6.4" cy="6.9" r="1.9" fill="#10d020"/></g><circle cx="5" cy="4.5" r="1.6" fill="#f01010"/><circle cx="3.5" cy="6.9" r="1.6" fill="#1030f0"/><circle cx="6.4" cy="6.9" r="1.6" fill="#10d020"/></svg><div class="t" style="left:458.30px;top:537.78px;font-size:9.3px;color:#000;font-weight:normal;">Styles_Web</div><svg class="ic" style="left:439.6px;top:536.5px" width="10" height="10" viewBox="0 0 10 10"><g stroke="#301818" stroke-width="0.7"><circle cx="5" cy="4.5" r="1.9" fill="#f01010"/><circle cx="3.5" cy="6.9" r="1.9" fill="#1030f0"/><circle cx="6.4" cy="6.9" r="1.9" fill="#10d020"/></g><circle cx="5" cy="4.5" r="1.6" fill="#f01010"/><circle cx="3.5" cy="6.9" r="1.6" fill="#1030f0"/><circle cx="6.4" cy="6.9" r="1.6" fill="#10d020"/></svg><div class="t" style="left:539.30px;top:537.78px;font-size:9.3px;color:#000;font-weight:normal;">Styles_Fill</div><svg class="ic" style="left:520.6px;top:536.5px" width="10" height="10" viewBox="0 0 10 10"><g stroke="#301818" stroke-width="0.7"><circle cx="5" cy="4.5" r="1.9" fill="#f01010"/><circle cx="3.5" cy="6.9" r="1.9" fill="#1030f0"/><circle cx="6.4" cy="6.9" r="1.9" fill="#10d020"/></g><circle cx="5" cy="4.5" r="1.6" fill="#f01010"/><circle cx="3.5" cy="6.9" r="1.6" fill="#1030f0"/><circle cx="6.4" cy="6.9" r="1.6" fill="#10d020"/></svg><div class="t" style="left:612.30px;top:537.78px;font-size:9.3px;color:#000;font-weight:normal;">IsoSurface</div><svg class="ic" style="left:592px;top:537px" width="14" height="12" viewBox="0 0 14 12"><path d="M4.6 2.4 Q6.6 2.6 7.4 4.6 Q9.6 4.8 10.6 6.6 Q11.8 8.8 9.6 9.8 Q7.6 10.6 6.2 8.8 Q4 8.6 2.8 6.8 Q1.6 4.6 3.2 2.9 Q3.8 2.3 4.6 2.4Z" fill="#60d8a0" stroke="#0c1a12" stroke-width="1.1"/></svg><div class="t" style="left:687.30px;top:537.78px;font-size:9.3px;color:#000;font-weight:normal;">Web</div><svg class="ic" style="left:668px;top:537px" width="14" height="11" viewBox="0 0 14 11"><path d="M2.3 8.8 L3.6 3.4 Q5 2.6 6.2 4.2 Q7.8 5.6 9 4 L8.8 2.4 Q11 1.8 11.6 4.2 L11.4 8.8" fill="none" stroke="#141414" stroke-width="1.5" stroke-linejoin="round"/><circle cx="6.8" cy="4.8" r="1.5" fill="#000"/></svg><div class="t" style="left:737.30px;top:537.78px;font-size:9.3px;color:#000;font-weight:normal;">Camera</div><svg class="ic" style="left:718px;top:537px" width="14" height="11" viewBox="0 0 14 11"><rect x="2.2" y="2.6" width="9" height="6.2" rx="0.6" fill="#080808"/><rect x="4.8" y="1.6" width="3.6" height="1.6" rx="0.5" fill="#080808"/><circle cx="6.6" cy="5.6" r="1.6" fill="#f4f4f4"/><circle cx="3.1" cy="2.6" r="0.6" fill="#e04040"/></svg><div class="t" style="left:803.30px;top:537.78px;font-size:9.3px;color:#000;font-weight:normal;">Render</div><svg class="ic" style="left:782px;top:536.5px" width="15" height="10" viewBox="0 0 15 10"><rect x="1.6" y="1.6" width="11.4" height="6.4" fill="#202020"/><rect x="1.6" y="1.6" width="11.4" height="2.2" fill="#000"/><path d="M2.6 5.2 L4 7.4 L5.6 4.8 L7.2 7.6 L8.6 5 L10 7.4 L11.8 4.8" stroke="#c8c8c8" stroke-width="0.9" fill="none"/></svg>
</body></html>
